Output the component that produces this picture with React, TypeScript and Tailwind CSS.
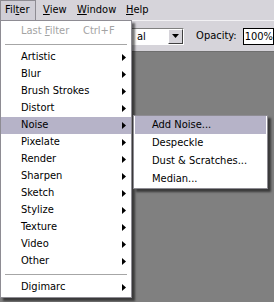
import { ReactNode } from "react";

const font = "font-['DejaVu_Sans_Condensed','DejaVu_Sans',sans-serif] [font-stretch:semi-condensed]";

const filters = [
	"Artistic",
	"Blur",
	"Brush Strokes",
	"Distort",
	"Noise",
	"Pixelate",
	"Render",
	"Sharpen",
	"Sketch",
	"Stylize",
	"Texture",
	"Video",
	"Other",
];

const noise = ["Add Noise...", "Despeckle", "Dust & Scratches...", "Median..."];

function Arrow() {
	return (
		<svg width="4" height="7" viewBox="0 0 4 7" className="block">
			<path d="M0 0 L4 3.5 L0 7 Z" fill="#000" />
		</svg>
	);
}

function Separator() {
	return (
		<div className="h-[9px] flex items-center px-[4px]">
			<div className="h-px w-full bg-[#a6a6a6]" />
		</div>
	);
}

function MenuRow({ label, active, children }: { label: ReactNode; active?: boolean; children?: ReactNode }) {
	return (
		<div
			className={`h-[17px] flex items-center justify-between pl-[20px] pr-[5px] ${
				active ? "bg-[#b6b3c8]" : ""
			}`}
		>
			<span>{label}</span>
			{children}
		</div>
	);
}

function BarItem({ children, width, pressed }: { children: ReactNode; width: string; pressed?: boolean }) {
	return (
		<div
			className={`h-[20px] flex items-center ${width} ${
				pressed ? "pl-[4px] border border-b-0 border-[#8e8c93] bg-[#d0ced6]" : "pl-[7px]"
			}`}
		>
			{children}
		</div>
	);
}

export default function App() {
	return (
		<div className={`relative w-[274px] h-[302px] overflow-hidden bg-[#808080] text-[11px] text-black ${font}`}>
			{/* menu bar */}
			<div className="h-[20px] flex bg-[#d6d4da]">
				<BarItem width="w-[36px]" pressed>
					Fil<u>t</u>er
				</BarItem>
				<BarItem width="w-[34px]">
					<u>V</u>iew
				</BarItem>
				<BarItem width="w-[49px]">
					<u>W</u>indow
				</BarItem>
				<BarItem width="w-[40px]">
					<u>H</u>elp
				</BarItem>
			</div>

			{/* options bar */}
			<div className="h-[32px] flex items-center bg-[#d6d4da] border-t border-[#f2f1f4] border-b border-b-[#6f6f6f]">
				<div className="ml-[118px] h-[17px] w-[73px] flex border border-t-[#808080] border-l-[#808080] border-b-white border-r-white bg-white">
					<span className="flex-1 pl-[18px] leading-[15px]">al</span>
					<div className="w-[15px] h-[15px] flex items-center justify-center bg-[#d6d4da] border border-t-white border-l-white border-b-[#404040] border-r-[#404040]">
						<svg width="7" height="4" viewBox="0 0 7 4">
							<path d="M0 0 H7 L3.5 4 Z" fill="#000" />
						</svg>
					</div>
				</div>
				<span className="ml-[12px]">Opacity:</span>
				<div className="ml-[6px] h-[17px] flex-1 border border-black bg-white pl-[1px] leading-[15px]">100%</div>
			</div>

			{/* Filter menu */}
			<div className="absolute left-0 top-[20px] w-[132px] bg-white border border-[#8e8c93] pt-[2px] pb-[1px] shadow-[3px_3px_2px_rgba(0,0,0,0.55)]">
				<div className="h-[17px] flex items-center pl-[20px] text-[#a3a3a3]">
					<span className="w-[62px]">
						Last <u>F</u>ilter
					</span>
					<span>Ctrl+F</span>
				</div>
				<Separator />
				{filters.map((f) => (
					<MenuRow key={f} label={f} active={f === "Noise"}>
						<Arrow />
					</MenuRow>
				))}
				<Separator />
				<MenuRow label="Digimarc">
					<Arrow />
				</MenuRow>
			</div>

			{/* Noise submenu */}
			<div className="absolute left-[133px] top-[115px] w-[135px] bg-white border border-[#8e8c93] px-[1px] shadow-[3px_3px_2px_rgba(0,0,0,0.55)]">
				{noise.map((n, i) => (
					<div
						key={n}
						className={`h-[18px] flex items-center pl-[17px] ${i === 0 ? "bg-[#b6b3c8]" : ""}`}
					>
						{n}
					</div>
				))}
			</div>
		</div>
	);
}
